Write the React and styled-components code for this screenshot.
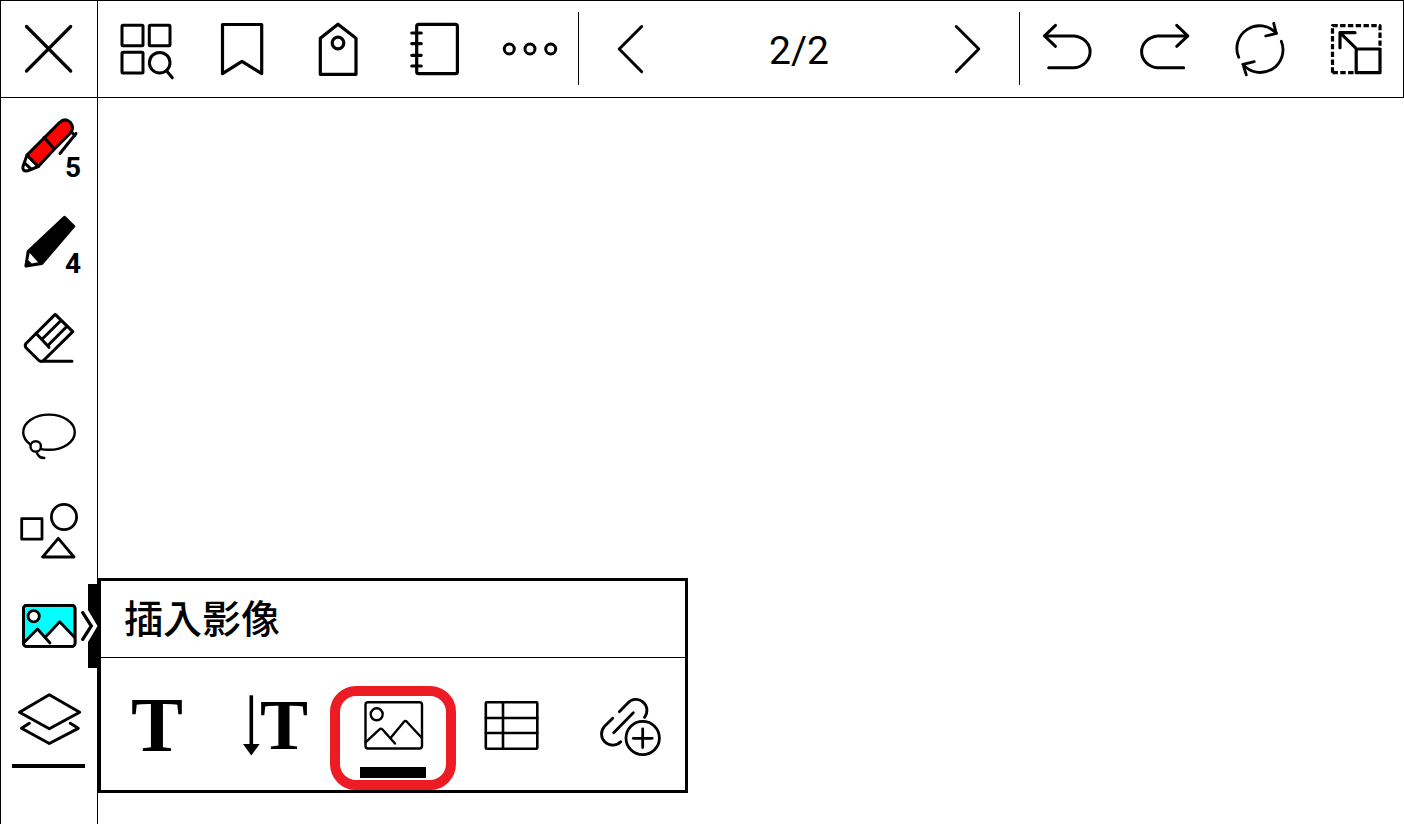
import React, { useState } from "react";
import styled, { createGlobalStyle, css } from "styled-components";

const GlobalStyle = createGlobalStyle`
  *,
  *::before,
  *::after {
    box-sizing: border-box;
  }

  body {
    margin: 0;
    background: #fff;
    color: #000;
    font-family: Roboto, "Noto Sans CJK TC", sans-serif;
  }
`;

const Page = styled.div`
  display: flex;
  flex-direction: column;
  min-height: 100vh;
`;

const Toolbar = styled.header`
  display: flex;
  align-items: center;
  height: 98px;
  box-shadow: inset 0 0 0 1px #000;
`;

const Corner = styled.div`
  display: flex;
  align-items: center;
  width: 98px;
  height: 98px;
  padding-left: 1px;
  border-right: 1px solid #000;
`;

const Group = styled.div`
  display: flex;
`;

const Divider = styled.span`
  width: 1px;
  height: 73px;
  margin-bottom: 1px;
  background: #000;
`;

const Pager = styled.nav`
  flex: 1;
  display: flex;
  align-items: center;
  justify-content: space-between;
`;

const PageNumber = styled.span`
  padding-top: 4px;
  font-size: 39px;
  line-height: 48px;
`;

const IconButton = styled.button`
  position: relative;
  flex: none;
  width: 96px;
  height: 96px;
  padding: 0;
  border: 0;
  background: none;
  color: inherit;
  font: inherit;
  cursor: pointer;
`;

const Icon = styled.svg`
  position: relative;
  display: block;
  width: 100%;
  height: 100%;
  overflow: visible;
  fill: none;
  stroke: #000;
  stroke-width: ${(props) => props.$stroke || 3.2};
  stroke-linecap: round;
  stroke-linejoin: round;
`;

const Body = styled.div`
  flex: 1;
  display: flex;
`;

const Sidebar = styled.aside`
  width: 98px;
  border: solid #000;
  border-width: 0 1px;
`;

const Canvas = styled.main`
  flex: 1;
`;

const Size = styled.span`
  position: absolute;
  right: 16px;
  bottom: 12px;
  font-size: 28px;
  font-weight: 700;
  line-height: 28px;
`;

const ToolSlot = styled.div`
  position: relative;
  height: 96px;

  ${(props) =>
    props.$open &&
    css`
      &::before {
        content: "";
        position: absolute;
        top: 6px;
        right: -1px;
        width: 10px;
        height: 84px;
        background: #000;
      }
    `}
`;

const Underline = styled.span`
  position: absolute;
  left: 11px;
  right: 12px;
  bottom: 2px;
  height: 4px;
  background: #000;
`;

const Panel = styled.section`
  position: absolute;
  top: 0;
  left: 97px;
  width: 590px;
  border: 3px solid #000;
  background: #fff;
`;

const PanelTitle = styled.h2`
  margin: 0;
  padding: 7px 23px 13px;
  border-bottom: 1px solid #000;
  font-family: "Noto Sans CJK TC", sans-serif;
  font-size: 39px;
  font-weight: 500;
  line-height: 56px;
`;

const Options = styled.div`
  display: grid;
  grid-template-columns: repeat(5, 1fr);
  margin: 0 -3px;
`;

const Option = styled(IconButton)`
  width: auto;
  height: 132px;

  ${(props) =>
    props.$selected &&
    css`
      &::before {
        content: "";
        position: absolute;
        top: 28px;
        left: -4px;
        right: -4px;
        bottom: 0;
        border: 10px solid #ed1c24;
        border-radius: 26px;
      }

      &::after {
        content: "";
        position: absolute;
        left: 26px;
        right: 26px;
        bottom: 12px;
        height: 11px;
        background: #000;
      }
    `}
`;

const Letter = styled.text`
  fill: #000;
  stroke: none;
  font-family: "Liberation Serif", serif;
  font-size: ${(props) => props.$size}px;
  font-weight: 700;
  text-anchor: middle;
`;

const CloseIcon = () => (
  <Icon viewBox="0 0 96 96">
    <path d="M25.5 25.5 69.7 70M69.7 25.5 25.5 70" />
  </Icon>
);

const OverviewIcon = () => (
  <Icon viewBox="0 0 96 96" $stroke={3}>
    <rect x="24" y="24.3" width="21" height="20.4" rx="1" />
    <rect x="51.3" y="24.3" width="20.7" height="20.4" rx="1" />
    <rect x="24" y="51.3" width="21" height="20.7" rx="1" />
    <circle cx="61.7" cy="61.7" r="10.3" />
    <path d="M68.7 70 74.3 76.8" />
  </Icon>
);

const BookmarkIcon = () => (
  <Icon viewBox="0 0 96 96">
    <path d="M28.5 23.5H67.7V72.6L48 60.3 28.5 72.6Z" />
  </Icon>
);

const TagIcon = () => (
  <Icon viewBox="0 0 96 96">
    <path d="M30.3 37.3 48 23.2 66 37.3V73.3H30.3Z" />
    <circle cx="48" cy="42" r="5.8" />
  </Icon>
);

const NotebookIcon = () => (
  <Icon viewBox="0 0 96 96">
    <rect x="30.7" y="23.3" width="40.7" height="49.4" rx="2" />
    <path d="M25.8 32H35.2M25.8 42.7H35.2M25.8 54.3H35.2M25.8 65H35.2" />
  </Icon>
);

const MoreIcon = () => (
  <Icon viewBox="0 0 96 96" $stroke={3}>
    <circle cx="27.3" cy="48" r="5" />
    <circle cx="48" cy="48" r="5" />
    <circle cx="68.7" cy="48" r="5" />
  </Icon>
);

const PrevIcon = () => (
  <Icon viewBox="0 0 96 96" $stroke={3}>
    <path d="M62.7 25.5 40.2 48 62.7 70.7" />
  </Icon>
);

const NextIcon = () => (
  <Icon viewBox="0 0 96 96" $stroke={3}>
    <path d="M33.3 25.5 55.8 48 33.3 70.7" />
  </Icon>
);

const UndoIcon = () => (
  <Icon viewBox="0 0 96 96" $stroke={3}>
    <path d="M35.5 24.3 24.5 34.9 35.5 45.3M24.5 34.9H54A17.5 16 0 0 1 54 66.8H28.7" />
  </Icon>
);

const RedoIcon = () => (
  <Icon viewBox="0 0 96 96" $stroke={3}>
    <path d="M60.7 24.3 71.8 34.9 60.7 45.3M71.8 34.9H41.7A17.5 16 0 0 0 41.7 66.8H67.7" />
  </Icon>
);

const RefreshIcon = () => (
  <Icon viewBox="0 0 96 96" $stroke={2.8}>
    <path d="M26.7 56.3A22.6 22.6 0 0 1 64.3 32.3M69.3 40.3A22.6 22.6 0 0 1 31 63.3" />
    <path d="M61.7 22.3 64.3 32.5 53.7 35M42.3 60.7 31 63.3 34.3 73.8" />
  </Icon>
);

const ResizeIcon = () => (
  <Icon viewBox="0 0 96 96">
    <path
      strokeLinecap="butt"
      strokeDasharray="5.4 2.4"
      d="M24.5 71.7V24.7H72V48M24.5 71.7H48"
    />
    <path d="M48.2 48H72V71.7H48.2ZM47.3 46.7 32 31.7M47 31.7H32V46.7" />
  </Icon>
);

const PenIcon = () => (
  <Icon viewBox="0 0 96 96" $stroke={3}>
    <path
      fill="#fff"
      d="M26 57 22 68.5Q21 73.5 26.5 72.8L37.3 68.5Z"
    />
    <path
      fill="#f00"
      d="M26 57 43.5 39.5 58.5 24.5Q64 19.5 69 24 73.5 29 70 34.5L53 51.5 37.3 68.5Z"
    />
    <path d="M43 39.5 53 50.5M23.8 65 30.3 71.3M70 33.5 74 37.5M75 35.5 59 55.5" />
  </Icon>
);

const PencilIcon = () => (
  <Icon viewBox="0 0 96 96">
    <path
      fill="#000"
      d="M63.5 23.5 72.6 32.3 40.7 69.5 25 72 27.3 57.3Z"
    />
    <path
      fill="#fff"
      stroke="none"
      d="M28.8 59 37 68.3 30.7 69.5 27.2 66Z"
    />
  </Icon>
);

const EraserIcon = () => (
  <Icon viewBox="0 0 96 96" $stroke={3}>
    <path d="M54.2 24.4 71.8 41.6 42.5 70.5Q40 72.3 37.7 70.3L25 57.8Q23.5 55.5 25 53.5ZM40 71.3H71" />
    <path d="M35 43.3 48 57.3M59.7 30.7 41 49.3M66 36.3 46.7 55.7" />
  </Icon>
);

const LassoIcon = () => (
  <Icon viewBox="0 0 96 96" $stroke={2.4}>
    <ellipse cx="48" cy="46.2" rx="25.8" ry="17.6" />
    <circle cx="34.7" cy="60.4" r="5.2" fill="#fff" />
    <path d="M35.5 66Q37.5 72 43.3 72" />
  </Icon>
);

const ShapesIcon = () => (
  <Icon viewBox="0 0 96 96" $stroke={2.8}>
    <rect x="20.7" y="36.7" width="20.3" height="20.5" />
    <circle cx="63" cy="35" r="12.6" />
    <path d="M57.3 56.3 73 75H41.6Z" />
  </Icon>
);

const PictureIcon = () => (
  <Icon viewBox="0 0 96 96" $stroke={2.8}>
    <rect x="22.5" y="27.3" width="51.5" height="41" rx="3" fill="#0ff" />
    <path
      fill="#fff"
      stroke="none"
      d="M23 65 36.5 51 44.7 58.7 58.7 43.7 73.5 59.5V68H23Z"
    />
    <rect x="22.5" y="27.3" width="51.5" height="41" rx="3" />
    <path d="M23 64.5 36.5 51 49 65M44.7 58.7 58.7 43.7 73.7 59.5" />
    <circle cx="32.7" cy="38.3" r="5.6" fill="#fff" />
    <path fill="#fff" stroke="none" d="M87 32 96.5 48 87 64Z" />
    <path strokeLinejoin="miter" strokeWidth="3.3" d="M81.7 34.7 90.3 48 81.7 61.3" />
  </Icon>
);

const LayersIcon = () => (
  <Icon viewBox="0 0 96 96" $stroke={3}>
    <path d="M48.3 20.8 78.7 38.2 48.3 54.8 18.5 38.2Z" />
    <path d="M28.3 49.3 20.5 54.3 48.3 69.5 77.3 54.3 69.3 49.3" />
  </Icon>
);

const TextIcon = () => (
  <Icon viewBox="0 0 118 132">
    <Letter x="59" y="93" $size={78}>
      T
    </Letter>
  </Icon>
);

const VerticalTextIcon = () => (
  <Icon viewBox="0 0 118 132">
    <path strokeLinecap="butt" strokeWidth="3.6" d="M35.3 37.3V87" />
    <path fill="#000" stroke="none" d="M27 86H43.7L35.3 97.5Z" />
    <Letter x="68" y="91" $size={72}>
      T
    </Letter>
  </Icon>
);

const ImageIcon = () => (
  <Icon viewBox="0 0 118 132" $stroke={2.4}>
    <rect x="31.5" y="44.3" width="56.5" height="46.2" rx="2.5" />
    <circle cx="42.7" cy="56.3" r="6" />
    <path d="M31.5 84.3 45.5 71.3Q47 70 48.5 71.5L61 85.5M56.3 80.3 70 63.7Q71.3 62.2 72.8 63.7L87.7 79.7" />
  </Icon>
);

const TableIcon = () => (
  <Icon viewBox="0 0 118 132" $stroke={2.6}>
    <rect x="33.8" y="44.3" width="51.5" height="46.5" rx="1" />
    <path d="M51 44.3V90.8M33.8 60H85.3M33.8 75H85.3" />
  </Icon>
);

const LinkIcon = () => (
  <Icon viewBox="0 0 118 132" $stroke={2.8}>
    <path d="M49.3 53.7 57.4 45.5A10.95 10.95 0 0 1 74.5 59.3M63.3 54.7 43.7 74.7M42.7 60.3 34.6 68.3A11.1 11.1 0 0 0 50.7 83.7" />
    <circle cx="72.7" cy="80" r="16.7" />
    <path d="M63.2 80.3H82.2M72.7 71V89.5" />
  </Icon>
);

const documentActions = [
  { label: "Overview", Glyph: OverviewIcon },
  { label: "Bookmark", Glyph: BookmarkIcon },
  { label: "Tag", Glyph: TagIcon },
  { label: "Notebook", Glyph: NotebookIcon },
  { label: "More", Glyph: MoreIcon },
];

const editActions = [
  { label: "Undo", Glyph: UndoIcon },
  { label: "Redo", Glyph: RedoIcon },
  { label: "Refresh", Glyph: RefreshIcon },
  { label: "Resize", Glyph: ResizeIcon },
];

const tools = [
  { id: "pen", label: "Pen", Glyph: PenIcon, size: 5 },
  { id: "pencil", label: "Pencil", Glyph: PencilIcon, size: 4 },
  { id: "eraser", label: "Eraser", Glyph: EraserIcon },
  { id: "lasso", label: "Lasso", Glyph: LassoIcon },
  { id: "shapes", label: "Shapes", Glyph: ShapesIcon },
  { id: "insert", label: "Insert", Glyph: PictureIcon },
  { id: "layers", label: "Layers", Glyph: LayersIcon, underline: true },
];

const insertOptions = [
  { id: "text", label: "Text", Glyph: TextIcon },
  { id: "vertical", label: "Vertical text", Glyph: VerticalTextIcon },
  { id: "image", label: "Image", Glyph: ImageIcon },
  { id: "table", label: "Table", Glyph: TableIcon },
  { id: "link", label: "Link", Glyph: LinkIcon },
];

function InsertPanel() {
  const [selected, setSelected] = useState("image");

  return (
    <Panel>
      <PanelTitle>插入影像</PanelTitle>
      <Options>
        {insertOptions.map(({ id, label, Glyph }) => (
          <Option
            key={id}
            type="button"
            aria-label={label}
            aria-pressed={selected === id}
            $selected={selected === id}
            onClick={() => setSelected(id)}
          >
            <Glyph />
          </Option>
        ))}
      </Options>
    </Panel>
  );
}

export default function App() {
  const [panelOpen, setPanelOpen] = useState(true);
  const [page, setPage] = useState(2);

  const renderAction = ({ label, Glyph }) => (
    <IconButton key={label} type="button" aria-label={label}>
      <Glyph />
    </IconButton>
  );

  return (
    <Page>
      <GlobalStyle />
      <Toolbar>
        <Corner>
          <IconButton type="button" aria-label="Close">
            <CloseIcon />
          </IconButton>
        </Corner>
        <Group>{documentActions.map(renderAction)}</Group>
        <Divider />
        <Pager>
          <IconButton
            type="button"
            aria-label="Previous page"
            onClick={() => setPage(1)}
          >
            <PrevIcon />
          </IconButton>
          <PageNumber>{page}/2</PageNumber>
          <IconButton
            type="button"
            aria-label="Next page"
            onClick={() => setPage(2)}
          >
            <NextIcon />
          </IconButton>
        </Pager>
        <Divider />
        <Group>{editActions.map(renderAction)}</Group>
      </Toolbar>
      <Body>
        <Sidebar>
          {tools.map(({ id, label, Glyph, size, underline }) => {
            const open = id === "insert" && panelOpen;

            return (
              <ToolSlot key={id} $open={open}>
                <IconButton
                  type="button"
                  aria-label={label}
                  onClick={() => id === "insert" && setPanelOpen(!panelOpen)}
                >
                  <Glyph />
                  {size && <Size>{size}</Size>}
                </IconButton>
                {underline && <Underline />}
                {open && <InsertPanel />}
              </ToolSlot>
            );
          })}
        </Sidebar>
        <Canvas />
      </Body>
    </Page>
  );
}
